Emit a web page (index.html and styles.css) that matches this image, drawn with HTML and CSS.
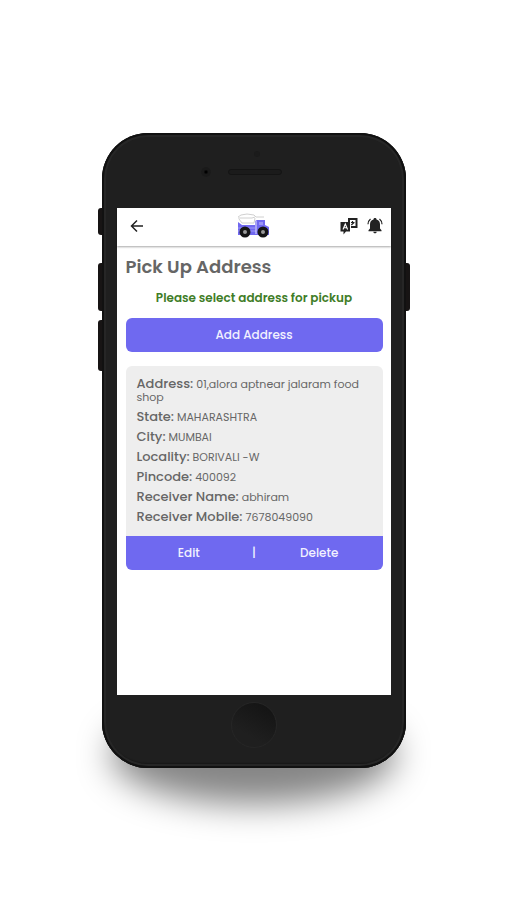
FILE: index.html
```html
<!DOCTYPE html>
<html lang="en">
<head>
  <meta charset="utf-8">
  <meta name="viewport" content="width=device-width, initial-scale=1">
  <title>Pick Up Address</title>
  <link rel="stylesheet" href="styles.css">
</head>
<body>
  <div class="phone">
    <span class="side-key mute"></span>
    <span class="side-key volume-up"></span>
    <span class="side-key volume-down"></span>
    <span class="side-key power"></span>

    <div class="phone-body">
      <div class="phone-top">
        <span class="sensor"></span>
        <span class="camera"></span>
        <span class="speaker"></span>
      </div>

      <div class="screen">
        <header class="navbar">
          <button class="icon-btn back" aria-label="Back">
            <svg width="14" height="14" viewBox="0 0 14 14" fill="none" stroke="#222" stroke-width="1.5">
              <path d="M13 7H2M7 1.500L1.500 7L7 12.500"/>
            </svg>
          </button>

          <svg class="logo" width="34" height="26" viewBox="0 0 34 26">
            <path d="M1 4L4 2L10 1L17 2L19 4H27M1 5H15L18 4M2 6L5 10H17L18 5" fill="#fff" stroke="#c4c4c4" stroke-width=".8"/>
            <path d="M1 9L5 12H18V8L20 7H28V12L32 14V22H1Z" fill="#7068f0"/>
            <path d="M22 9H26V12H22Z" fill="#9a94f6"/>
            <path d="M1 15H18M1 18H19" stroke="#aaa5fa" stroke-width=".8"/>
            <path d="M19 8V21" stroke="#fff" stroke-width=".8"/>
            <circle cx="8" cy="19" r="5.500" fill="#151515"/>
            <circle cx="8" cy="19" r="2" fill="#999"/>
            <circle cx="26" cy="19" r="5.500" fill="#151515"/>
            <circle cx="26" cy="19" r="2" fill="#999"/>
          </svg>

          <div class="nav-actions">
            <button class="icon-btn" aria-label="Language">
              <svg width="18" height="18" viewBox="0 0 18 18">
                <path d="M8 1H17.500V11H11V9H15.500V3H10V5H8Z" fill="#222"/>
                <path d="M11 5.500H14.500M12.500 4V5.500M11.300 8L14 5.500" fill="none" stroke="#222" stroke-width="1.200"/>
                <path d="M.5 5H10V14.500H6L3.500 17.500V14.500H.5Z" fill="#222"/>
                <path d="M3 12.500L5.300 7L7.600 12.500M4 10.800H6.600" fill="none" stroke="#fff" stroke-width="1.100"/>
              </svg>
            </button>
            <button class="icon-btn" aria-label="Notifications">
              <svg width="16" height="18" viewBox="0 0 16 18">
                <path d="M8 1C9 1 9.500 1.600 9.500 2.400C12 3 13 5 13 7.500V11.500L14.500 13.200V14.200H1.500V13.200L3 11.500V7.500C3 5 4 3 6.500 2.400C6.500 1.600 7 1 8 1Z" fill="#222"/>
                <path d="M6.300 14.800H9.700C9.500 16.800 6.500 16.800 6.300 14.800Z" fill="#222"/>
                <path d="M3.500 2C2 3.200 1 5 1 7.200M12.500 2C14 3.200 15 5 15 7.200" fill="none" stroke="#222" stroke-width="1.200"/>
              </svg>
            </button>
          </div>
        </header>

        <main class="content">
          <h1>Pick Up Address</h1>
          <p class="hint">Please select address for pickup</p>
          <button class="add-btn">Add Address</button>

          <div class="card">
            <div class="card-body">
              <p><b>Address:</b> 01,alora aptnear jalaram food shop</p>
              <p><b>State:</b> MAHARASHTRA</p>
              <p><b>City:</b> MUMBAI</p>
              <p><b>Locality:</b> BORIVALI -W</p>
              <p><b>Pincode:</b> 400092</p>
              <p><b>Receiver Name:</b> abhiram</p>
              <p><b>Receiver Mobile:</b> 7678049090</p>
            </div>
            <div class="card-actions">
              <button>Edit</button>
              <span>|</span>
              <button>Delete</button>
            </div>
          </div>
        </main>
      </div>

      <div class="phone-bottom">
        <span class="home"></span>
      </div>
    </div>
  </div>
</body>
</html>
```

FILE: styles.css
```css
* {
  box-sizing: border-box;
}
body {
  margin: 0;
  min-height: 100vh;
  padding: 133px 20px 100px;
  background: #fff;
  font-family: Poppins, Inter, sans-serif;
  color: #666;
}
h1, p {
  margin: 0;
}
button {
  border: 0;
  padding: 0;
  font-family: inherit;
  cursor: pointer;
}

/* phone */
.phone {
  position: relative;
  z-index: 0;
  max-width: 304px;
  margin: 0 auto;
}
.phone::after {
  content: "";
  position: absolute;
  z-index: -1;
  left: 3%;
  right: 3%;
  bottom: -36px;
  height: 100px;
  border-radius: 50%;
  background: rgba(0, 0, 0, 0.48);
  filter: blur(17px);
}
.phone-body {
  padding: 0 15px;
  background: #1f1f1f;
  border-radius: 46px;
  box-shadow: inset 0 0 0 2px #111, inset 0 0 0 4px #262626, inset 0 -4px 2px #080808;
}
.phone-top {
  position: relative;
  height: 75px;
}
.sensor, .camera, .speaker {
  position: absolute;
  background: #1b1b1b;
}
.sensor {
  top: 18px;
  left: 50%;
  width: 6px;
  height: 6px;
  border-radius: 50%;
}
.camera {
  top: 34px;
  left: 31%;
  width: 10px;
  height: 10px;
  border-radius: 50%;
  background: radial-gradient(#000 10%, #1a1a1a 35%);
}
.speaker {
  top: 36px;
  left: 50%;
  width: 54px;
  height: 6px;
  margin-left: -26px;
  border: 1px solid #141414;
  border-radius: 3px;
}
.phone-bottom {
  display: flex;
  justify-content: center;
  height: 73px;
  padding-top: 7px;
}
.home {
  width: 46px;
  height: 46px;
  border-radius: 50%;
  background: linear-gradient(30deg, #1f1f1f 30%, #121212);
  border: 1px solid #262626;
}
.side-key {
  position: absolute;
  z-index: -1;
  left: -4px;
  width: 8px;
  border-radius: 3px;
  background: #171414;
}
.mute {
  top: 75px;
  height: 27px;
}
.volume-up {
  top: 130px;
  height: 48px;
}
.volume-down {
  top: 187px;
  height: 51px;
}
.power {
  top: 130px;
  left: auto;
  right: -4px;
  height: 48px;
}

/* app */
.screen {
  min-height: 487px;
  background: #fff;
}
.navbar {
  display: grid;
  grid-template-columns: 1fr auto 1fr;
  align-items: center;
  height: 38px;
  padding: 0 8px 2px;
  box-shadow: 0 1px 2px rgba(0, 0, 0, 0.35);
}
.icon-btn {
  display: flex;
  background: none;
}
.back {
  padding: 5px;
}
.nav-actions {
  display: flex;
  justify-content: flex-end;
  gap: 9px;
}
.content {
  padding: 11px 8px 16px 9px;
}
h1 {
  font-size: 18px;
  font-weight: 600;
  line-height: 20px;
}
.hint {
  margin: 12px 0;
  text-align: center;
  font-size: 12px;
  font-weight: 600;
  line-height: 17px;
  color: #3f7d27;
}
.add-btn {
  display: block;
  width: 100%;
  height: 34px;
  border-radius: 6px;
  background: #6f69f0;
  color: #f2f1ff;
  font-size: 12px;
  font-weight: 500;
}
.card {
  margin-top: 14px;
  border-radius: 6px;
  overflow: hidden;
  background: #eee;
}
.card-body {
  display: flex;
  flex-direction: column;
  gap: 7px;
  padding: 12px 11px;
  font-size: 11px;
  line-height: 13px;
}
.card-body b {
  font-size: 13px;
  font-weight: 500;
  line-height: 1px;
}
.card-actions {
  display: grid;
  grid-template-columns: 1fr auto 1fr;
  align-items: center;
  height: 34px;
  background: #6f69f0;
  color: #f2f1ff;
  font-size: 12px;
  font-weight: 500;
}
.card-actions button {
  height: 100%;
  background: none;
  color: inherit;
  font-size: inherit;
  font-weight: inherit;
}
```
